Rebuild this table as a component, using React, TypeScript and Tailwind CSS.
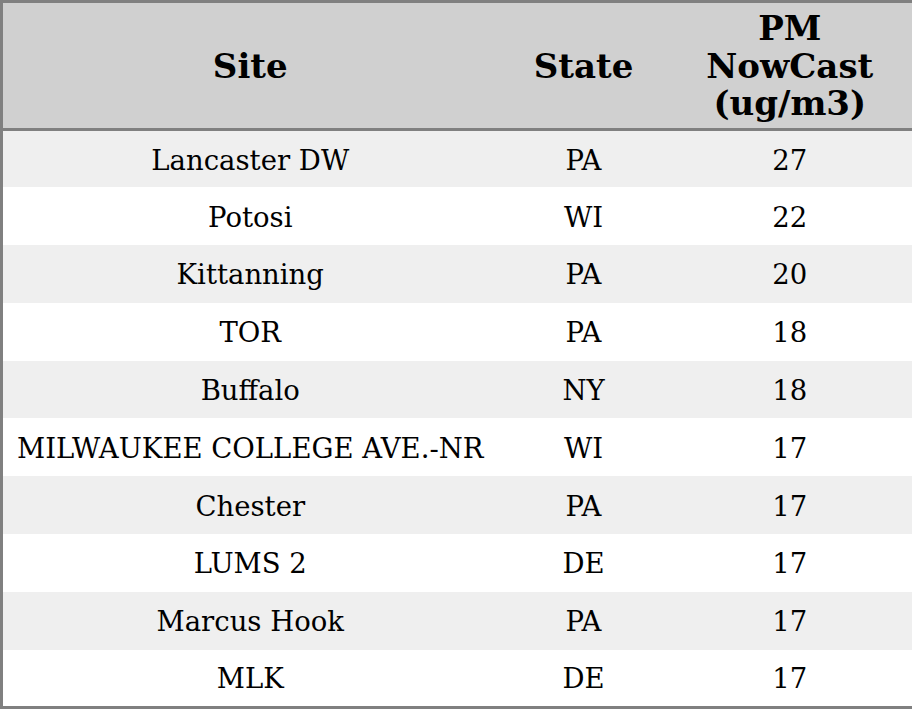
const ROWS = [
  { site: 'Lancaster DW', state: 'PA', pm: 27 },
  { site: 'Potosi', state: 'WI', pm: 22 },
  { site: 'Kittanning', state: 'PA', pm: 20 },
  { site: 'TOR', state: 'PA', pm: 18 },
  { site: 'Buffalo', state: 'NY', pm: 18 },
  { site: 'MILWAUKEE COLLEGE AVE.-NR', state: 'WI', pm: 17 },
  { site: 'Chester', state: 'PA', pm: 17 },
  { site: 'LUMS 2', state: 'DE', pm: 17 },
  { site: 'Marcus Hook', state: 'PA', pm: 17 },
  { site: 'MLK', state: 'DE', pm: 17 },
];

export default function App() {
  return (
    <div className="w-[912px] h-[711px] bg-white font-['DejaVu_Serif',serif] text-black">
      <table className="w-[912px] table-fixed border-collapse border-[3px] border-[#808080]">
        <colgroup>
          <col className="w-[496px]" />
          <col className="w-[172px]" />
          <col className="w-[244px]" />
        </colgroup>
        <thead>
          <tr className="h-[128px] bg-[#d0d0d0] border-b-[3px] border-[#808080]">
            <th className="pt-[2px] text-[34px] font-bold leading-[37.5px] text-center align-middle">Site</th>
            <th className="pt-[2px] text-[34px] font-bold leading-[37.5px] text-center align-middle">State</th>
            <th className="pt-[2px] pr-[2px] text-[34px] font-bold leading-[37.5px] text-center align-middle">
              PM
              <br />
              NowCast
              <br />
              (ug/m3)
            </th>
          </tr>
        </thead>
        <tbody>
          {ROWS.map((r, i) => (
            <tr key={i} className={`h-[57.8px] ${i % 2 === 0 ? 'bg-[#efefef]' : 'bg-white'}`}>
              <td className="p-0 pt-[2px] text-[27.5px] text-center align-middle">{r.site}</td>
              <td className="p-0 pt-[2px] text-[27.5px] text-center align-middle">{r.state}</td>
              <td className="p-0 pt-[2px] pr-[2px] text-[27.5px] text-center align-middle">{r.pm}</td>
            </tr>
          ))}
        </tbody>
      </table>
    </div>
  );
}
